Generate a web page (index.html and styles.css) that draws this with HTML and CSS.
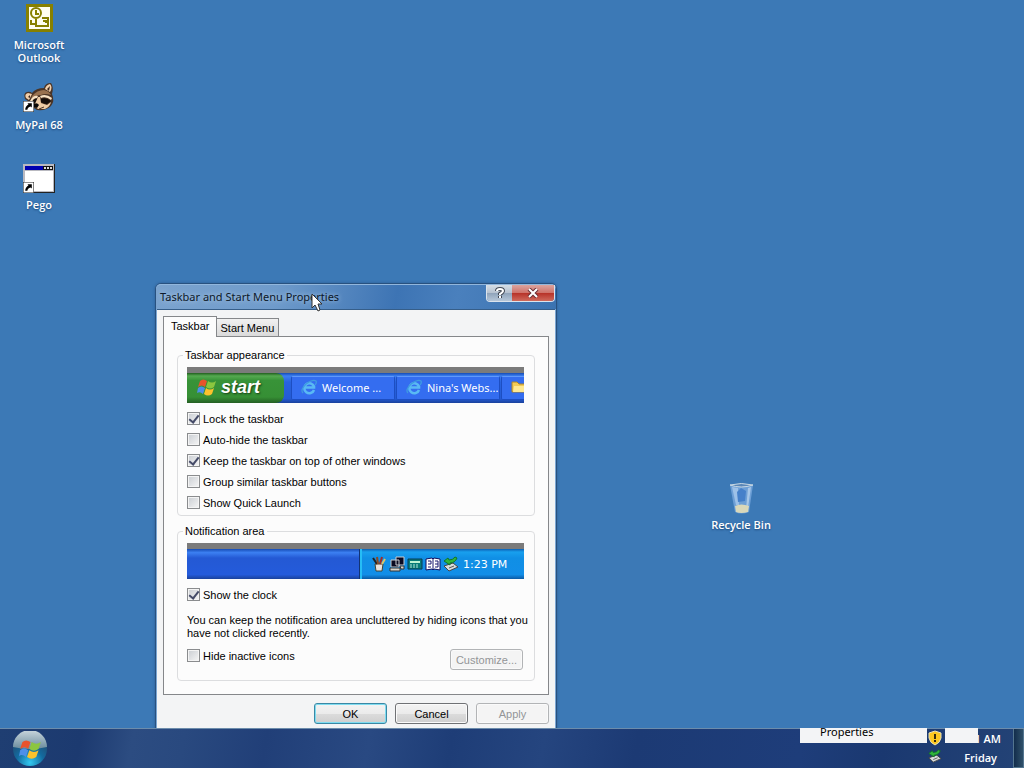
FILE: index.html
```html
<!DOCTYPE html>
<html lang="en">
<head>
    <meta charset="UTF-8">
    <meta name="viewport" content="width=device-width, initial-scale=1.0">
    <title>Taskbar and Start Menu Properties</title>
    <link rel="stylesheet" href="styles.css">
</head>
<body>
    <svg class="defs" width="0" height="0" aria-hidden="true">
        <symbol id="flag" viewBox="0 0 20 18">
            <path d="M3 3Q6 0 10 3L8 9Q5 6 1 9Z" fill="#e9532c"/>
            <path d="M11 3Q15 6 19 3L17 9Q13 12 9 9Z" fill="#8cc63f"/>
            <path d="M1 10Q4 7 8 10L6 16Q3 13 0 15Z" fill="#4d8fe8"/>
            <path d="M9 10Q13 13 17 10L15 16Q11 19 7 16Z" fill="#fbc22d"/>
        </symbol>
        <symbol id="ie" viewBox="0 0 16 16">
            <path d="M13 11A5 5 0 1 1 13 7.500V8.500H4" fill="none" stroke="#59b9f4" stroke-width="2.600"/>
            <path d="M2 14Q-1 11 5 5Q12 0 15 2Q16 4 14 6" fill="none" stroke="#3f9ce0" stroke-width="1.300"/>
        </symbol>
        <symbol id="shortcut" viewBox="0 0 10 10">
            <path d="M0 0H10V10H0Z" fill="#fff" stroke="#222"/>
            <path d="M4 2H8V6L7 5Q4 6 4 8H2Q2 5 5 3Z" fill="#000"/>
        </symbol>
        <symbol id="dongle" viewBox="0 0 16 16">
            <path d="M1 10L10 7L15 11L6 15Z" fill="#d8dcdc" stroke="#444"/>
            <path d="M6 12L11 10" stroke="#555"/>
            <path d="M1 5L5 2L6 4Q10 4 12 1L14 2Q12 7 7 7L7 9Z" fill="#2fb53c" stroke="#12752a"/>
        </symbol>
    </svg>

    <main class="desktop">
        <a class="shortcut outlook" href="#outlook">
            <svg width="32" height="32" viewBox="0 0 32 32">
                <path d="M3 2H30V30H3Z" fill="#878000"/>
                <path d="M6 5H27V27H6Z" fill="#fffef0"/>
                <g fill="none" stroke="#878000" stroke-width="2">
                    <circle cx="13" cy="11" r="5"/>
                    <path d="M13 8V12H16M13 17V24H25V16H19M8 18V22H12"/>
                    <path d="M20 19H23V21"/>
                </g>
            </svg>
            <span>Microsoft Outlook</span>
        </a>
        <a class="shortcut mypal" href="#mypal">
            <svg width="32" height="32" viewBox="0 0 32 32">
                <path d="M2 17Q0 11 4 10Q7 9 9 11Q13 6 21 6Q22 1 28 1Q31 5 29 12Q32 19 28 24Q23 29 14 28Q7 24 5 19Z" fill="#4a3426"/>
                <path d="M3 16Q1 12 5 11L9 12L6 18ZM22 7Q23 3 27 2Q30 5 27 10Z" fill="#f2cfaa"/>
                <path d="M5 15L7 13L7 16ZM24 7L27 4L26 9Z" fill="#3a261c"/>
                <path d="M9 14Q14 8 21 8Q26 9 28 13Q22 11 18 13Q13 13 8 18Z" fill="#98714f"/>
                <path d="M7 19Q10 13 15 14L14 16Q10 16 9 21ZM17 14Q23 11 29 16L28 18Q23 14 18 16Z" fill="#f8e2c4"/>
                <path d="M9 20Q11 16 15 17L14 22ZM18 17Q23 15 28 19L24 22Q20 22 18 20Z" fill="#150e0b"/>
                <path d="M15 15L17 15L18 21L24 23L28 20Q27 25 22 27L15 27L11 24Z" fill="#eccba6"/>
                <path d="M11 22Q14 20 16 23L14 26L11 25Z" fill="#080605"/>
                <path d="M16 27L21 25" stroke="#4a3426"/>
                <use href="#shortcut" x="0" y="19" width="11" height="11"/>
            </svg>
            <span>MyPal 68</span>
        </a>
        <a class="shortcut pego" href="#pego">
            <svg width="32" height="32" viewBox="0 0 32 32">
                <path d="M0 2H32V31H0Z" fill="#222"/>
                <path d="M0 2H31V30H0Z" fill="#b9b9c0"/>
                <path d="M2 4H30V8H2Z" fill="#0000b0"/>
                <path d="M20 4H30V8H20Z" fill="#111"/>
                <path d="M21 5H23V7H21ZM24 5H26V7H24ZM27 5H29V7H27Z" fill="#ddd"/>
                <path d="M2 9H30V29H2Z" fill="#fff"/>
                <use href="#shortcut" x="0" y="20" width="11" height="11"/>
            </svg>
            <span>Pego</span>
        </a>
        <a class="shortcut recycle" href="#recycle">
            <svg width="32" height="32" viewBox="0 0 32 32">
                <path d="M5 3L28 3L24 30Q16 33 10 30Z" fill="#6d9fd6"/>
                <path d="M7 5L13 6L14 23L11 23Z" fill="#9dc1e8"/>
                <path d="M12 10L16 6L21 9L20 19L13 20Z" fill="#4580ca"/>
                <path d="M23 6L26 5L23 26L21 27Z" fill="#a6c6e8"/>
                <path d="M10 24Q16 21 24 24L23 30Q16 32 11 30Z" fill="#dad8b9"/>
                <path d="M5 3Q16 7 28 3Q16 0 5 3Z" fill="#5a87b8" stroke="#c9d9e4"/>
            </svg>
            <span>Recycle Bin</span>
        </a>

        <section class="window" aria-labelledby="windowTitle">
            <header class="titlebar">
                <h1 id="windowTitle">Taskbar and Start Menu Properties</h1>
                <div class="caption-buttons">
                    <button class="help" type="button" aria-label="Help">
                        <svg width="10" height="12" viewBox="0 0 10 12" fill="none"><path d="M2 4Q2 2 5 2Q8 2 8 4Q8 5 5 7V8M5 9V11" stroke="#444a55" stroke-width="4"/><path d="M2 4Q2 2 5 2Q8 2 8 4Q8 5 5 7V8M5 9V11" stroke="#fff" stroke-width="2"/></svg>
                    </button>
                    <button class="close" type="button" aria-label="Close">
                        <svg width="12" height="10" viewBox="0 0 12 10" fill="none"><path d="M2 1L10 9M10 1L2 9" stroke="#6a3035" stroke-width="4"/><path d="M2 1L10 9M10 1L2 9" stroke="#fff" stroke-width="2"/></svg>
                    </button>
                </div>
            </header>
            <form class="window-body">
                <div class="tabs" role="tablist">
                    <button class="tab active" type="button" role="tab" aria-selected="true">Taskbar</button>
                    <button class="tab" type="button" role="tab" aria-selected="false">Start Menu</button>
                </div>
                <div class="page" role="tabpanel">
                    <fieldset>
                        <legend>Taskbar appearance</legend>
                        <div class="preview">
                            <div class="xp-start"><svg width="20" height="20"><use href="#flag"/></svg>start</div>
                            <div class="xp-tasks">
                                <div class="xp-task"><svg width="16" height="16"><use href="#ie"/></svg>Welcome ...</div>
                                <div class="xp-task"><svg width="16" height="16"><use href="#ie"/></svg>Nina's Webs...</div>
                                <div class="xp-task cut">
                                    <svg width="16" height="14" viewBox="0 0 16 14"><path d="M1 2H6L8 4H15V12H1Z" fill="#f3cb55" stroke="#a9842f"/><path d="M3 6H16V12H2Z" fill="#ffe993"/></svg>
                                </div>
                            </div>
                        </div>
                        <div class="options">
                            <label><input type="checkbox" checked>Lock the taskbar</label>
                            <label><input type="checkbox">Auto-hide the taskbar</label>
                            <label><input type="checkbox" checked>Keep the taskbar on top of other windows</label>
                            <label><input type="checkbox">Group similar taskbar buttons</label>
                            <label><input type="checkbox">Show Quick Launch</label>
                        </div>
                    </fieldset>
                    <fieldset class="notification">
                        <legend>Notification area</legend>
                        <div class="preview">
                            <div class="xp-empty"></div>
                            <div class="xp-tray">
                                <svg width="16" height="16" viewBox="0 0 16 16"><path d="M4 8H12L11 15H5Z" fill="#e9e2dc" stroke="#443"/><path d="M6 8L2 2" stroke="#222" stroke-width="2"/><path d="M7 8L6 1" stroke="#8b4a20" stroke-width="2"/><path d="M9 8L11 1" stroke="#a32b25" stroke-width="2"/><path d="M11 8L14 3" stroke="#d9c56a" stroke-width="2"/></svg>
                                <svg width="16" height="16" viewBox="0 0 16 16"><path d="M7 1H15V9H7ZM2 4H10V11H2Z" fill="#0a0a20" stroke="#c8ccd0"/><path d="M1 12H11V15H1ZM11 10H15V13H12Z" fill="#d8d4cc" stroke="#333"/></svg>
                                <svg width="16" height="16" viewBox="0 0 16 16"><path d="M1 3H15V13H1Z" fill="#087b78" stroke="#053c55"/><path d="M3 5H13V7H3Z" fill="#bdf3d4"/><path d="M3 9H12M3 11H12" stroke="#b3e5d7" stroke-dasharray="2 1"/></svg>
                                <svg width="16" height="16" viewBox="0 0 16 16"><path d="M1 3L7 2L8 3L9 2L15 3V14L9 13L8 14L7 13L1 14Z" fill="#fff" stroke="#101060"/><path d="M8 3V14M3 5H6V8H3M3 11H6M10 5H13V8H10M10 11H13V8" stroke="#191970" fill="none"/></svg>
                                <svg width="16" height="16"><use href="#dongle"/></svg>
                                <span>1:23 PM</span>
                            </div>
                        </div>
                        <div class="options">
                            <label><input type="checkbox" checked>Show the clock</label>
                        </div>
                        <p>You can keep the notification area uncluttered by hiding icons that you have not clicked recently.</p>
                        <div class="hide-row">
                            <label><input type="checkbox">Hide inactive icons</label>
                            <button class="btn" type="button" disabled>Customize...</button>
                        </div>
                    </fieldset>
                </div>
                <div class="actions">
                    <button class="btn default" type="button">OK</button>
                    <button class="btn" type="button">Cancel</button>
                    <button class="btn" type="button" disabled>Apply</button>
                </div>
            </form>
        </section>

        <svg class="cursor" width="13" height="19" viewBox="0 0 13 19"><path d="M1 1V15L4 12L7 18L9 17L7 11H11Z" fill="#fff" stroke="#333"/></svg>
    </main>

    <footer class="taskbar">
        <button class="orb" type="button" aria-label="Start">
            <svg width="36" height="36" viewBox="0 0 36 36">
                <defs>
                    <radialGradient id="orbFill" cx="50%" cy="90%" r="80%">
                        <stop offset="0" stop-color="#32c8f0"/>
                        <stop offset=".5" stop-color="#136a9e"/>
                        <stop offset="1" stop-color="#25466a"/>
                    </radialGradient>
                    <linearGradient id="orbShine" x2="0" y2="1">
                        <stop offset="0" stop-color="#c9d6dc"/>
                        <stop offset="1" stop-color="#6a8b9d"/>
                    </linearGradient>
                </defs>
                <circle cx="18" cy="18" r="17" fill="url(#orbFill)"/>
                <path d="M1 16A17 17 0 0 1 35 16Q18 20 1 16Z" fill="url(#orbShine)"/>
                <use href="#flag" x="7" y="6" width="23" height="24"/>
            </svg>
        </button>
        <div class="tray-icons">
            <svg width="14" height="16" viewBox="0 0 14 16"><path d="M7 1L13 3V8Q12 13 7 15Q2 13 1 8V3Z" fill="#fcc820" stroke="#e7e0bb"/><path d="M7 4V9M7 10V12" stroke="#352c10" stroke-width="2"/></svg>
            <svg width="14" height="14"><use href="#dongle"/></svg>
        </div>
        <div class="clock">
            <span>1 AM</span>
            <span>Friday</span>
        </div>
        <button class="show-desktop" type="button" aria-label="Show desktop"></button>
        <!-- leftover of the context menu, only its last item is visible -->
        <div class="menu-rest"><span>Properties</span></div>
        <div class="menu-rest small"></div>
    </footer>
</body>
</html>
```

FILE: styles.css
```css
* {
    box-sizing: border-box;
}

body {
    margin: 0;
    height: 100vh;
    display: flex;
    flex-direction: column;
    overflow: hidden;
    background: #3c79b6;
    font-family: "Liberation Sans", Arial, sans-serif;
    font-size: 11px;
    color: #000;
}

button {
    font: inherit;
    color: inherit;
    padding: 0;
}

.defs {
    position: absolute;
}

.desktop {
    flex: 1;
    position: relative;
    overflow: hidden;
}

/* desktop icons */
.shortcut {
    position: absolute;
    width: 72px;
    display: flex;
    flex-direction: column;
    align-items: center;
    gap: 4px;
    color: #fff;
    font: 600 11px/13px "Open Sans", "Noto Sans", sans-serif;
    text-align: center;
    text-decoration: none;
    text-shadow: 0 1px 2px #1d4778;
}

.outlook {
    left: 3px;
    top: 2px;
}

.mypal {
    left: 3px;
    top: 82px;
}

.pego {
    left: 3px;
    top: 162px;
}

.recycle {
    left: 705px;
    top: 482px;
}

/* window */
.window {
    position: absolute;
    left: 155px;
    top: 283px;
    width: 402px;
    border: 1px solid #28517f;
    border-radius: 6px 6px 0 0;
    padding: 0 1px;
    background: #7ba6d3;
    box-shadow: 0 0 3px #2c5b91;
}

.titlebar {
    height: 25px;
    display: flex;
    justify-content: space-between;
    margin: 0 -1px;
    padding-left: 4px;
    border-top: 1px solid #91b6dc;
    border-radius: 5px 5px 0 0;
    background: linear-gradient(100deg, #7ba3ce, #6f9bcb 30%, #3d74b4 60%, #4a80bd 75%, #3b73b1);
}

.titlebar h1 {
    margin: 0;
    font: 400 11px/24px "Noto Sans", sans-serif;
    color: #0c1829;
    text-shadow: 0 0 5px #bdd3e9;
}

.caption-buttons {
    display: flex;
    height: 17px;
    margin-right: 1px;
    border: 1px solid #dbe4ed;
    border-top: 0;
    border-radius: 0 0 4px 4px;
    overflow: hidden;
}

.caption-buttons button {
    display: flex;
    align-items: center;
    justify-content: center;
    border: 0;
}

.help {
    width: 25px;
    background: linear-gradient(#d6dee6, #b5c1cf 50%, #8fa3ba 51%, #b6c7d9);
}

.close {
    width: 42px;
    background: linear-gradient(#dba49f, #cf7168 50%, #b73228 51%, #cf6a5c);
}

.window-body {
    padding: 6px 6px 7px;
    background: #f3f4f5;
    border-top: 1px solid #365e89;
}

.tabs {
    display: flex;
    align-items: flex-end;
}

.tab {
    height: 18px;
    padding: 0 4px;
    border: 1px solid #85878a;
    border-width: 1px 1px 0 0;
    background: linear-gradient(#f1f1f1, #dadada);
}

.tab.active {
    height: 21px;
    padding: 0 6px 2px 7px;
    border-width: 1px 1px 0;
    background: #fcfcfc;
    position: relative;
    margin-bottom: -1px;
}

.page {
    padding: 11px 13px 13px;
    border: 1px solid #85878a;
    background: #fcfcfc;
}

fieldset {
    min-width: 0;
    margin: 0;
    padding: 5px 10px 2px 9px;
    border: 1px solid #dcdddf;
    border-radius: 4px;
}

.notification {
    margin-top: 8px;
    padding-bottom: 10px;
}

legend {
    margin-left: -4px;
    padding: 0 2px;
    line-height: 14px;
}

.preview {
    height: 36px;
    display: flex;
    overflow: hidden;
    margin-bottom: 5px;
    border-top: 6px solid #7b7b7b;
    color: #fff;
    font-family: "Noto Sans", sans-serif;
}

.xp-start {
    width: 97px;
    display: flex;
    align-items: center;
    gap: 4px;
    padding: 0 0 2px 10px;
    border-radius: 0 8px 8px 0;
    background: linear-gradient(#235f20, #55aa50 10%, #389338 25%, #368f35 80%, #245f23);
    font: italic 700 18px "Liberation Sans", sans-serif;
    text-shadow: 1px 1px 2px #163e15;
    z-index: 1;
}

.xp-tasks {
    flex: 1;
    min-width: 0;
    display: flex;
    gap: 1px;
    margin-left: -8px;
    padding: 3px 0 3px 15px;
    background: linear-gradient(#164cb5, #3c80f2 10%, #2863df 30%, #245bd5 85%, #1a429c);
}

.xp-task {
    flex: 0 0 104px;
    display: flex;
    align-items: center;
    gap: 5px;
    padding: 0 0 2px 9px;
    border: 1px solid #1d4ec2;
    border-top-color: #6099fa;
    border-radius: 2px;
    background: #346df0;
    white-space: nowrap;
}

.xp-empty {
    flex: 1;
    border-right: 1px solid #123374;
    background: linear-gradient(#164cb5, #3c80f2 12%, #2459d4 30%, #245bdb 85%, #1a429c);
}

.xp-tray {
    width: 164px;
    display: flex;
    align-items: center;
    gap: 2px;
    padding-left: 9px;
    border-left: 2px solid #26bdf5;
    background: linear-gradient(#0d60b5, #18a0ee 10%, #108fe5 30%, #128ee8 85%, #0b5aa5);
}

.xp-tray span {
    margin-left: 2px;
    font-family: "DejaVu Sans", sans-serif;
}

.options label,
.hide-row label {
    display: flex;
    align-items: center;
    gap: 3px;
    height: 21px;
}

input[type="checkbox"] {
    appearance: none;
    width: 13px;
    height: 13px;
    margin: 0;
    display: grid;
    place-items: center;
    border: 1px solid #8a8c8e;
    background: linear-gradient(135deg, #c9cdd2, #f6f6f6);
    box-shadow: inset 0 0 0 1px #f4f4f4;
}

input[type="checkbox"]:checked::before {
    content: "";
    width: 4px;
    height: 8px;
    margin-bottom: 2px;
    border: solid #454b68;
    border-width: 0 2px 2px 0;
    transform: rotate(38deg);
}

.notification p {
    margin: 9px -8px 5px 0;
    line-height: 13px;
}

.hide-row {
    display: flex;
    justify-content: space-between;
}

.hide-row .btn {
    margin: 4px 1px 0 0;
}

.btn {
    width: 73px;
    height: 21px;
    border: 1px solid #707275;
    border-radius: 3px;
    background: linear-gradient(#f3f3f3, #ebebeb 50%, #dcdcdc 51%, #cfcfcf);
    box-shadow: inset 0 0 0 1px #fafafa;
}

.btn.default {
    border-color: #3a88a5;
    box-shadow: inset 0 0 0 1px #7fdcf0;
}

.btn:disabled {
    border-color: #b2b4b6;
    background: #f4f4f4;
    color: #939597;
}

.actions {
    display: flex;
    justify-content: flex-end;
    gap: 8px;
    margin-top: 8px;
}

.cursor {
    position: absolute;
    left: 311px;
    top: 293px;
}

/* taskbar */
.taskbar {
    height: 40px;
    position: relative;
    display: flex;
    align-items: stretch;
    border-top: 1px solid #6c8cab;
    background: linear-gradient(100deg, #1f3e72, #1c3a70 8%, #2c4c81 13%, #29497f 18%, #213f78 26%, #294982 36%, #1e3d77 44%, #25457f 53%, #1c3a74 62%, #1e3d7a 78%, #1a3870 86%, #244376);
    color: #fff;
    font: 600 11px/19px "Open Sans", "Noto Sans", sans-serif;
}

.orb {
    margin-left: 12px;
    border: 0;
    background: none;
}

.orb svg {
    display: block;
}

.tray-icons {
    margin-left: auto;
    display: flex;
    flex-direction: column;
    gap: 3px;
    padding-top: 1px;
}

.clock {
    width: 60px;
    display: flex;
    flex-direction: column;
    align-items: flex-end;
    padding-right: 1px;
}

.clock span:last-child {
    margin-right: 4px;
}

.show-desktop {
    width: 11px;
    margin-left: 11px;
    border: 1px solid #53758f;
    border-top: 0;
    background: linear-gradient(90deg, #122d4c, #2f5069);
}

.menu-rest {
    position: absolute;
    top: -1px;
    right: 97px;
    width: 127px;
    height: 15px;
    overflow: hidden;
    background: #f3f4f6;
    color: #000;
    font: 400 11px/15px "Noto Sans", sans-serif;
}

.menu-rest span {
    display: block;
    margin: -4px 0 0 20px;
}

.menu-rest.small {
    right: 46px;
    width: 33px;
}
```
